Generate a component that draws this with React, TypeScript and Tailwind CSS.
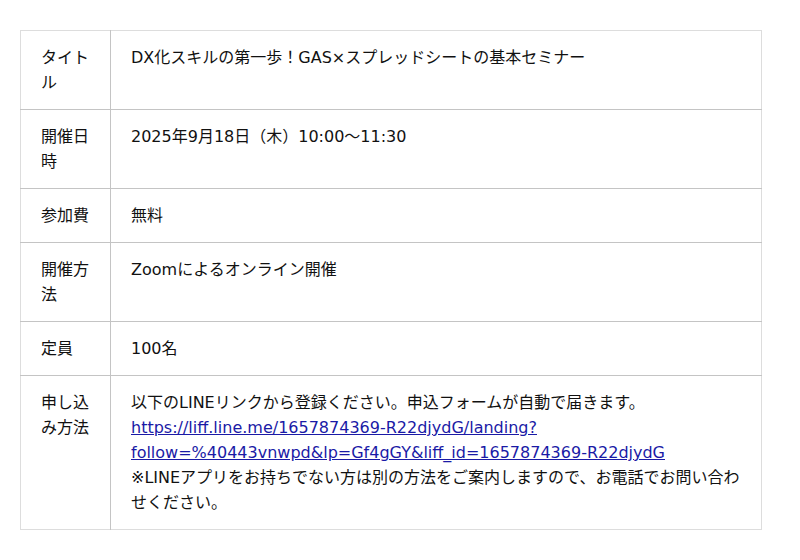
import React from "react";

const rows: { label: string; value: React.ReactNode }[] = [
  { label: "タイトル", value: "DX化スキルの第一歩！GAS×スプレッドシートの基本セミナー" },
  { label: "開催日時", value: "2025年9月18日（木）10:00〜11:30" },
  { label: "参加費", value: "無料" },
  { label: "開催方法", value: "Zoomによるオンライン開催" },
  { label: "定員", value: "100名" },
  {
    label: "申し込み方法",
    value: (
      <>
        以下のLINEリンクから登録ください。申込フォームが自動で届きます。
        <br />
        <a href="#" className="text-[#1a1aa6] underline">
          https://liff.line.me/1657874369-R22djydG/landing?follow=%40443vnwpd&amp;lp=Gf4gGY&amp;liff_id=1657874369-R22djydG
        </a>
        <br />
        ※LINEアプリをお持ちでない方は別の方法をご案内しますので、お電話でお問い合わせください。
      </>
    ),
  },
];

export default function App() {
  return (
    <div
      className="min-h-[560px] bg-white pt-[30px] pl-[20px]"
      style={{ fontFamily: '"DejaVu Sans", "Noto Sans CJK JP", sans-serif' }}
    >
      <table className="w-[742px] border-collapse border border-[#dddddd] text-[16px] leading-[25px] text-[#111]">
        <tbody>
          {rows.map((r, i) => (
            <tr key={i} className={i < rows.length - 1 ? "border-b border-[#c4c4c4]" : ""}>
              <td className="w-[90px] align-top border-r border-[#c4c4c4] px-[20px] py-[14px]">
                {r.label}
              </td>
              <td className="align-top px-[20px] py-[14px]">{r.value}</td>
            </tr>
          ))}
        </tbody>
      </table>
    </div>
  );
}
